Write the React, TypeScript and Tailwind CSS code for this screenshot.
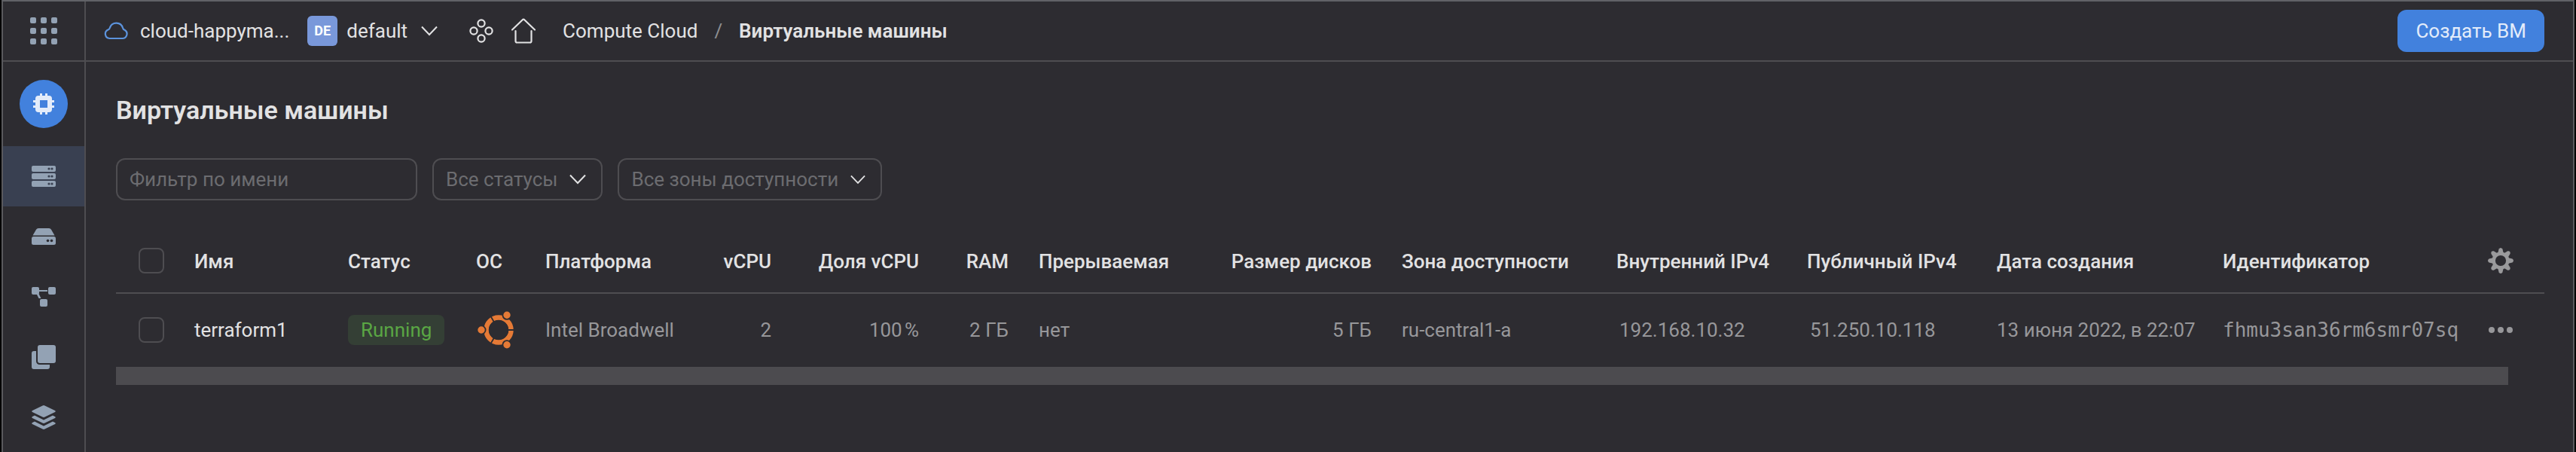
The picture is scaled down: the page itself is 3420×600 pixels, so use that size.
import React from "react";

const font = "font-['Roboto','Liberation_Sans',sans-serif]";

function Chevron({ className }: { className: string }) {
  return (
    <svg viewBox="0 0 22 14" className={className} fill="none" stroke="currentColor" strokeWidth="2" aria-hidden="true">
      <path d="M1 1.5 11 12 21 1.5" />
    </svg>
  );
}

function GridIcon() {
  const p = [0, 14, 28];
  return (
    <svg viewBox="0 0 36 36" className="size-9" fill="#93a2b4" aria-hidden="true">
      {p.map((y) => p.map((x) => <rect key={`${x}-${y}`} x={x} y={y} width="8" height="8" rx="2" />))}
    </svg>
  );
}

function ChipIcon() {
  return (
    <svg viewBox="0 0 28 28" className="size-7" aria-hidden="true">
      <path
        fill="#e3ecfa"
        fillRule="evenodd"
        d="M9 0h3v3h4V0h3v3h2a4 4 0 0 1 4 4v2h3v3h-3v4h3v3h-3v2a4 4 0 0 1-4 4h-2v3h-3v-3h-4v3H9v-3H7a4 4 0 0 1-4-4v-2H0v-3h3v-4H0V9h3V7a4 4 0 0 1 4-4h2zM9 9v10h10V9z"
      />
    </svg>
  );
}

function ServersIcon() {
  return (
    <svg viewBox="0 0 32 28" className="w-8" aria-hidden="true">
      {[0, 10, 20].map((y) => (
        <g key={y}>
          <rect y={y} width="32" height="8" rx="2" fill="#93a2b4" />
          <circle cx="23" cy={y + 4} r="1.6" fill="#394051" />
          <circle cx="27" cy={y + 4} r="1.6" fill="#394051" />
        </g>
      ))}
    </svg>
  );
}

function DiskIcon() {
  return (
    <svg viewBox="0 0 32 22" className="w-8" aria-hidden="true">
      <path fill="#93a2b4" d="M1.500 9.500 6 1.800Q7 0 9 0h14q2 0 3 1.800l4.500 7.700z" />
      <rect y="11" width="32" height="11" rx="2.500" fill="#93a2b4" />
      <circle cx="21.500" cy="16.500" r="1.800" fill="#2d2c31" />
      <circle cx="26.500" cy="16.500" r="1.800" fill="#2d2c31" />
    </svg>
  );
}

function NodesIcon() {
  return (
    <svg viewBox="0 0 32 26" className="w-8" fill="#93a2b4" aria-hidden="true">
      <rect width="10" height="10" rx="2" />
      <rect x="22" width="10" height="10" rx="2" />
      <rect x="11" y="16" width="10" height="10" rx="2" />
      <path d="M9 4h12v2H9zM6.500 9h3l3 6H9.500z" />
    </svg>
  );
}

function CopiesIcon() {
  return (
    <svg viewBox="0 0 32 32" className="w-8" fill="#93a2b4" aria-hidden="true">
      <rect x="8" width="24" height="24" rx="3" />
      <path d="M6 8v13.500A4.500 4.500 0 0 0 10.500 26H24v3a3 3 0 0 1-3 3H3a3 3 0 0 1-3-3V11a3 3 0 0 1 3-3z" />
    </svg>
  );
}

function LayersIcon() {
  return (
    <svg viewBox="0 0 32 32" className="w-8" fill="#93a2b4" aria-hidden="true">
      <path d="M14.500.500q1.500-.8 3 0L31 7q1.500 1 0 2l-13.500 6.500q-1.500.8-3 0L1 9Q-.500 8 1 7z" />
      <path d="M1 15l3-1.500L16 19.500l12-6L31 15q1.500 1 0 2l-13.500 6.500q-1.500.8-3 0L1 17q-1.500-1 0-2z" />
      <path d="M1 23l3-1.500L16 27.500l12-6L31 23q1.500 1 0 2l-13.500 6.500q-1.500.8-3 0L1 25q-1.500-1 0-2z" />
    </svg>
  );
}

function UbuntuIcon() {
  return (
    <svg viewBox="0 0 48 50" className="w-12" aria-hidden="true">
      <circle cx="28" cy="25" r="16.500" fill="none" stroke="#e57a36" strokeWidth="6.500" />
      <path stroke="#2d2c31" strokeWidth="1.800" d="M28 25h22M28 25 17 6M28 25 17 44" />
      <circle cx="28" cy="25" r="13" fill="#2d2c31" />
      <g fill="#e57a36" stroke="#2d2c31" strokeWidth="1.800">
        <circle cx="39" cy="5.300" r="5.600" />
        <circle cx="39" cy="44.700" r="5.600" />
        <circle cx="5" cy="25" r="5.600" />
      </g>
    </svg>
  );
}

function GearIcon() {
  return (
    <svg viewBox="-17 -17 34 34" className="size-[34px]" fill="#9a9a9c" aria-hidden="true">
      {[0, 45, 90, 135, 180, 225, 270, 315].map((a) => (
        <path key={a} d="M-4-9-2.400-15.500Q0-18.500 2.400-15.500L4-9z" transform={`rotate(${a})`} />
      ))}
      <circle r="9.300" fill="none" stroke="#9a9a9c" strokeWidth="4.400" />
    </svg>
  );
}

const sideItems = [
  { label: "Виртуальные машины", icon: <ServersIcon />, active: true },
  { label: "Диски", icon: <DiskIcon /> },
  { label: "Группы ВМ", icon: <NodesIcon /> },
  { label: "Снимки", icon: <CopiesIcon /> },
  { label: "Образы", icon: <LayersIcon /> },
];

const th = "p-0 pt-0.5 text-left font-medium whitespace-nowrap";
const thRight = "p-0 pt-0.5 text-right font-medium whitespace-nowrap";
const td = "p-0 text-left whitespace-nowrap";
const tdRight = "p-0 text-right whitespace-nowrap";
const checkbox = "block size-[34px] appearance-none rounded-lg border-2 border-[#4e4d51]";

export default function App() {
  return (
    <div className="bg-black px-0.5">
      <div className={`flex min-h-screen border-x-2 border-t-2 border-x-[#59595d] border-t-[#616267] bg-[#2d2c31] text-[26px] leading-8 text-[#e2e2e3] ${font}`}>
        <nav className="flex w-[110px] shrink-0 flex-col border-r-2 border-[#4e4d51]">
          <button aria-label="Все сервисы" className="flex h-20 items-center justify-center border-b-2 border-[#4e4d51]">
            <GridIcon />
          </button>
          <a href="#compute" aria-label="Compute Cloud" className="mx-auto my-6 flex size-16 items-center justify-center rounded-full bg-[#4281dd]">
            <ChipIcon />
          </a>
          {sideItems.map((it) => (
            <a
              key={it.label}
              href="#section"
              aria-label={it.label}
              className={it.active ? "flex h-20 items-center justify-center bg-[#394051]" : "flex h-20 items-center justify-center"}
            >
              {it.icon}
            </a>
          ))}
        </nav>
        <div className="flex min-w-0 flex-1 flex-col">
          <header className="flex h-20 items-center border-b-2 border-[#4e4d51] pr-[38px] pl-6">
            <svg viewBox="0 0 32 24" className="mr-4 w-8" fill="none" stroke="#5c93dc" strokeWidth="2.200" aria-hidden="true">
              <path d="M7.500 22h17a6 6 0 0 0 3-11.200q-2-.6-2.500-2.800A9 9 0 0 0 8 7.500Q7.800 9.500 5.500 10.500A6 6 0 0 0 7.500 22z" />
            </svg>
            <a href="#cloud">cloud-happyma...</a>
            <span className="ml-6 flex h-10 w-10 items-center justify-center rounded-md bg-[#7998da] text-lg font-bold text-white">DE</span>
            <button className="ml-3 flex items-center gap-[18px]">
              default
              <Chevron className="w-[22px]" />
            </button>
            <button aria-label="Сервисы" className="ml-[42px]">
              <svg viewBox="0 0 32 32" className="size-8" fill="none" stroke="#e2e2e3" strokeWidth="2.200" aria-hidden="true">
                <circle cx="16" cy="6" r="4.600" />
                <circle cx="16" cy="26" r="4.600" />
                <circle cx="6" cy="16" r="4.600" />
                <circle cx="26" cy="16" r="4.600" />
              </svg>
            </button>
            <a href="#home" aria-label="Главная" className="ml-6">
              <svg viewBox="0 0 32 34" className="w-8" fill="none" stroke="#e2e2e3" strokeWidth="2.200" strokeLinecap="round" aria-hidden="true">
                <path d="M1 15.500 14.800 2.200q1.200-1 2.400 0L31 15.500M5.500 17v13.500q0 2 2 2h17q2 0 2-2V17" />
              </svg>
            </a>
            <a href="#compute" className="ml-9">Compute Cloud</a>
            <span className="mx-[22px] text-[#8e8e91]">/</span>
            <span className="font-semibold">Виртуальные машины</span>
            <button className="ml-auto h-14 rounded-xl bg-[#4281dd] px-6 text-[#e3ecfa]">Создать ВМ</button>
          </header>
          <main className="pt-[42px] pr-[38px] pl-10">
            <h1 className="text-[34px] leading-[44px] font-semibold">Виртуальные машины</h1>
            <div className="mt-[42px] flex gap-5 text-[#6c6c70]">
              <input
                type="text"
                aria-label="Фильтр по имени"
                placeholder="Фильтр по имени"
                className="h-14 w-[400px] rounded-xl border-2 border-[#4e4d51] px-4 placeholder:text-[#6c6c70]"
              />
              <button className="flex h-14 items-center gap-4 rounded-xl border-2 border-[#4e4d51] px-4">
                Все статусы
                <Chevron className="mr-1 w-[22px] text-[#e2e2e3]" />
              </button>
              <button className="flex h-14 items-center gap-4 rounded-xl border-2 border-[#4e4d51] px-4">
                Все зоны доступности
                <Chevron className="mr-1 w-5 text-[#e2e2e3]" />
              </button>
            </div>
            <table className="mt-[38px] w-full table-fixed border-collapse">
              <colgroup>
                <col className="w-[104px]" />
                <col className="w-[204px]" />
                <col className="w-[170px]" />
                <col className="w-[92px]" />
                <col className="w-[204px]" />
                <col className="w-[96px]" />
                <col className="w-[196px]" />
                <col className="w-[119px]" />
                <col className="w-[217px]" />
                <col className="w-[265px]" />
                <col className="w-[325px]" />
                <col className="w-[253px]" />
                <col className="w-[252px]" />
                <col className="w-[300px]" />
                <col />
                <col className="w-[75px]" />
              </colgroup>
              <thead>
                <tr className="h-[85px] border-b-2 border-[#4e4d51]">
                  <th className="p-0 pl-[30px]"><input type="checkbox" aria-label="Выбрать все" className={checkbox} /></th>
                  <th className={th}>Имя</th>
                  <th className={th}>Статус</th>
                  <th className={th}>ОС</th>
                  <th className={th}>Платформа</th>
                  <th className={thRight}>vCPU</th>
                  <th className={thRight}>Доля vCPU</th>
                  <th className={thRight}>RAM</th>
                  <th className="p-0 pt-0.5 pl-10 text-left font-medium whitespace-nowrap">Прерываемая</th>
                  <th className={thRight}>Размер дисков</th>
                  <th className="p-0 pt-0.5 pl-10 text-left font-medium whitespace-nowrap">Зона доступности</th>
                  <th className={th}>Внутренний IPv4</th>
                  <th className={th}>Публичный IPv4</th>
                  <th className={th}>Дата создания</th>
                  <th className={th}>Идентификатор</th>
                  <th className="p-0"><button aria-label="Настроить" className="flex"><GearIcon /></button></th>
                </tr>
              </thead>
              <tbody>
                <tr className="h-24 text-[#97979a]">
                  <td className="p-0 pl-[30px]"><input type="checkbox" aria-label="Выбрать terraform1" className={checkbox} /></td>
                  <td className={td}><a href="#vm" className="text-[#e2e2e3]">terraform1</a></td>
                  <td className={td}>
                    <span className="inline-flex h-10 items-center rounded-lg bg-[#343f35] px-[17px] align-middle text-[#5aa644]">Running</span>
                  </td>
                  <td className="p-0 pl-0.5"><UbuntuIcon /></td>
                  <td className={td}>Intel Broadwell</td>
                  <td className={tdRight}>2</td>
                  <td className={tdRight}>100&#8239;%</td>
                  <td className={tdRight}>2 ГБ</td>
                  <td className="p-0 pl-10 text-left">нет</td>
                  <td className={tdRight}>5 ГБ</td>
                  <td className="p-0 pl-10 text-left whitespace-nowrap">ru-central1-a</td>
                  <td className="p-0 pl-1 text-left">192.168.10.32</td>
                  <td className="p-0 pl-1 text-left">51.250.10.118</td>
                  <td className={td}>13 июня 2022, в 22:07</td>
                  <td className="p-0 font-['DejaVu_Sans_Mono',monospace]">fhmu3san36rm6smr07sq</td>
                  <td className="p-0">
                    <button aria-label="Действия" className="flex gap-1 pl-px">
                      <i className="size-2 rounded-full bg-[#97979a]" />
                      <i className="size-2 rounded-full bg-[#97979a]" />
                      <i className="size-2 rounded-full bg-[#97979a]" />
                    </button>
                  </td>
                </tr>
              </tbody>
            </table>
            <div className="mt-0.5 mr-12 h-6 bg-[#4c4b4f]" />
          </main>
        </div>
      </div>
    </div>
  );
}
